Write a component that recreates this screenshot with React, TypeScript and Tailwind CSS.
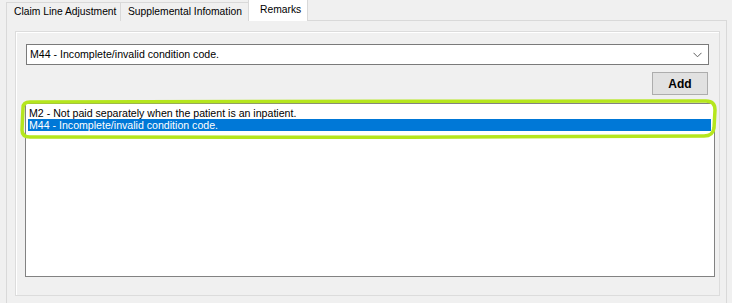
import React from 'react';

const tabs = [
  { label: 'Claim Line Adjustment', w: 'w-[115px]' },
  { label: 'Supplemental Infomation', w: 'w-[129px]' },
];

const remarks = [
  'M2 - Not paid separately when the patient is an inpatient.',
  'M44 - Incomplete/invalid condition code.',
];

export default function App() {
  const selected = 1;

  return (
    <div
      className="relative w-[732px] h-[303px] overflow-hidden bg-[#f0f0f0] text-[10.6px] text-black"
      style={{ fontFamily: '"Liberation Sans", Arial, sans-serif' }}
    >
      {/* tab strip */}
      <div className="flex items-end h-[21px] pl-[6px] relative z-10 text-[10.3px]">
        {tabs.map((t) => (
          <div
            key={t.label}
            className={`${t.w} h-[19px] border border-b-0 border-[#d9d9d9] -mr-px flex items-center pl-[7px] bg-[#f0f0f0] leading-none whitespace-nowrap`}
          >
            {t.label}
          </div>
        ))}
        <div className="w-[60px] h-[22px] border border-b-0 border-[#d9d9d9] bg-white flex items-start pt-[5px] pl-[11px] leading-none">
          Remarks
        </div>
      </div>

      {/* tab page */}
      <div className="ml-[6px] w-[721px] h-[290px] -mt-px border border-[#d9d9d9] bg-[#f0f0f0] pt-[10px] pl-[8px]">
        {/* group box */}
        <div className="w-[705px] h-[265px] border border-[#dcdcdc] shadow-[inset_1px_1px_0_#ffffff] pt-[12px]">
          {/* combo */}
          <div className="ml-[10px] w-[683px] h-[21px] border border-[#7a7a7a] bg-white flex items-center pl-[3px] pr-[6px]">
            <span className="flex-1 leading-none">{remarks[selected]}</span>
            <svg width="9" height="6" viewBox="0 0 9 6" className="mt-px">
              <path d="M0.5 0.8 L4.5 4.8 L8.5 0.8" fill="none" stroke="#5f5f5f" strokeWidth="1" />
            </svg>
          </div>

          <div className="flex justify-end w-[692px] mt-[7px]">
            <button
              type="button"
              className="w-[56px] h-[23px] border border-[#adadad] bg-[#e1e1e1] text-[12px] font-bold leading-none"
            >
              Add
            </button>
          </div>

          {/* list */}
          <div className="ml-[9px] mt-[8px] w-[690px] h-[174px] border border-[#828282] bg-white pt-[3px] pl-[2px] pr-[3px]">
            {remarks.map((r, i) => (
              <div
                key={r}
                className={`h-[12px] leading-[12px] pl-px ${i === selected ? 'bg-[#0078d7] text-white' : ''}`}
              >
                {r}
              </div>
            ))}
          </div>
        </div>
      </div>

      {/* hand-drawn highlight */}
      <svg className="absolute left-0 top-0 pointer-events-none" width="732" height="303">
        <path
          d="M30 102 C200 103 500 100 706 101 Q715 101 715 110 L714 128 Q713 136 704 136 C500 138 200 137 30 137 Q22 137 22 130 L23 108 Q23 102 30 102 Z"
          fill="none"
          stroke="#b5e61d"
          strokeWidth="3.5"
        />
      </svg>
    </div>
  );
}
